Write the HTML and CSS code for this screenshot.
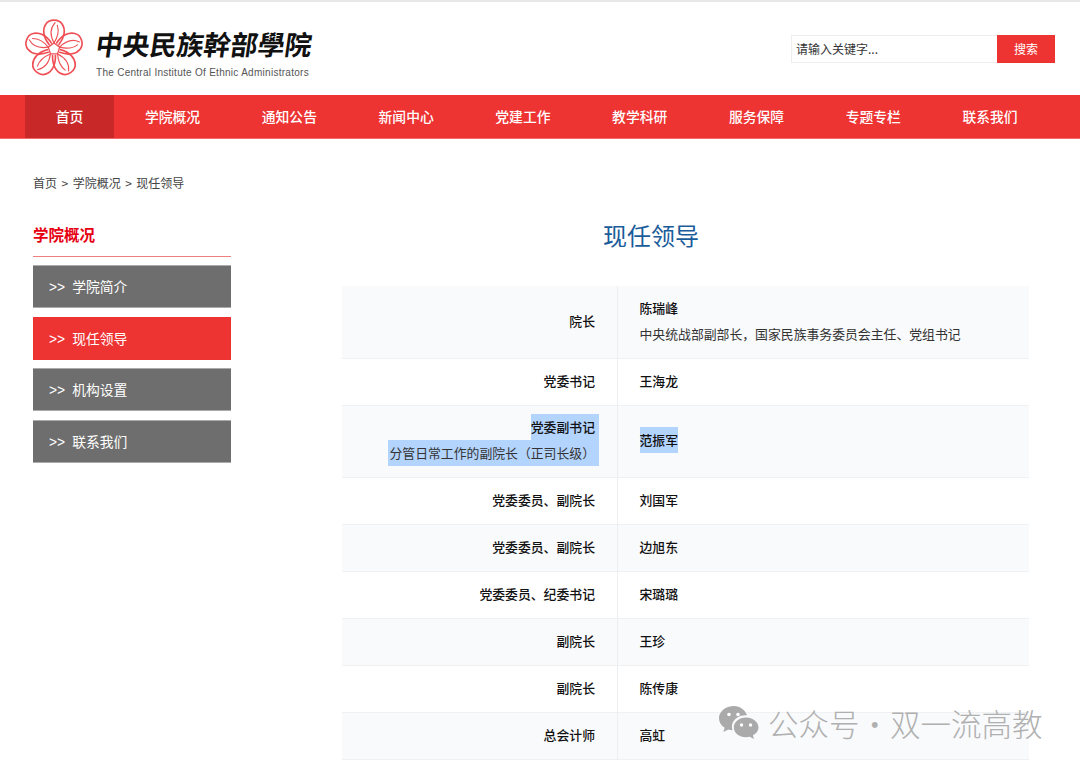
FILE: index.html
```html
<!DOCTYPE html>
<html lang="zh-CN">

<head>
    <meta charset="UTF-8">
    <title>现任领导</title>
    <link rel="stylesheet" href="styles.css">
</head>

<body>

    <div class="header">
        <div class="logo">
            <svg class="flower" viewBox="0 0 60 60" width="66" height="66" fill="none" stroke="#ef4f54" stroke-width="1.500" stroke-linecap="round">
                <g id="petal">
                    <path d="M25.500 26C20 19 19.500 12 22.500 7.500C25.500 2.500 34.500 2.500 37.500 7.500C40.500 12 40 19 34.500 26"/>
                    <path d="M30 24.500C26.500 18 26.500 11 31 6" stroke-width="1"/>
                    <path d="M30 24.500C33.500 19 34.500 13 33 8.500" stroke-width="1"/>
                </g>
                <use href="#petal" transform="rotate(72 30 30)"/>
                <use href="#petal" transform="rotate(144 30 30)"/>
                <use href="#petal" transform="rotate(216 30 30)"/>
                <use href="#petal" transform="rotate(288 30 30)"/>
                <path d="M30 24.500L35.200 28.300L33.200 34.400H26.800L24.800 28.300Z" stroke-width="1.200" stroke-linejoin="round"/>
            </svg>
            <div class="logo-text">
                <div class="logo-cn">中央民族幹部學院</div>
                <div class="logo-en">The Central Institute Of Ethnic Administrators</div>
            </div>
        </div>
        <div class="search">
            <div class="search-input">请输入关键字...</div>
            <div class="search-btn">搜索</div>
        </div>
    </div>

    <div class="nav">
        <a class="active">首页</a>
        <a>学院概况</a>
        <a>通知公告</a>
        <a>新闻中心</a>
        <a>党建工作</a>
        <a>教学科研</a>
        <a>服务保障</a>
        <a>专题专栏</a>
        <a>联系我们</a>
    </div>

    <div class="crumb">首页 <span>&gt;</span> 学院概况 <span>&gt;</span> 现任领导</div>

    <div class="main">
        <div class="side">
            <div class="side-title">学院概况</div>
            <a class="side-item"><span>&gt;&gt;</span>学院简介</a>
            <a class="side-item on"><span>&gt;&gt;</span>现任领导</a>
            <a class="side-item"><span>&gt;&gt;</span>机构设置</a>
            <a class="side-item"><span>&gt;&gt;</span>联系我们</a>
        </div>
        <div class="content">
            <h1>现任领导</h1>
            <table>
                <tr class="tall">
                    <td class="job">院长</td>
                    <td class="name">陈瑞峰<div class="note">中央统战部副部长，国家民族事务委员会主任、党组书记</div></td>
                </tr>
                <tr>
                    <td class="job">党委书记</td>
                    <td class="name">王海龙</td>
                </tr>
                <tr class="tall">
                    <td class="job"><span class="sel">党委副书记</span><br><span class="sel note">分管日常工作的副院长（正司长级）</span></td>
                    <td class="name"><span class="sel-name">范振军</span></td>
                </tr>
                <tr>
                    <td class="job">党委委员、副院长</td>
                    <td class="name">刘国军</td>
                </tr>
                <tr>
                    <td class="job">党委委员、副院长</td>
                    <td class="name">边旭东</td>
                </tr>
                <tr>
                    <td class="job">党委委员、纪委书记</td>
                    <td class="name">宋璐璐</td>
                </tr>
                <tr>
                    <td class="job">副院长</td>
                    <td class="name">王珍</td>
                </tr>
                <tr>
                    <td class="job">副院长</td>
                    <td class="name">陈传康</td>
                </tr>
                <tr>
                    <td class="job">总会计师</td>
                    <td class="name">高虹</td>
                </tr>
            </table>
        </div>
    </div>

    <div class="watermark">
        <svg viewBox="0 0 42 36" width="42" height="36" fill="#aaaaaa">
            <path d="M16 1C7.700 1 1 6.500 1 13.300C1 17.200 3.200 20.600 6.700 22.800L5.300 27L10.300 24.500C11.600 24.900 13 25.200 14.500 25.300C14.100 24 13.900 22.900 13.900 21.700C13.900 15.200 20 10.300 27.600 10.300H29C27.100 5 22 1 16 1Z"/>
            <path d="M28 12.500C21.100 12.500 15.800 17 15.800 22.400C15.800 27.800 21.100 32.200 28 32.200C29.300 32.200 30.600 32 31.800 31.700L36 34L34.900 30.300C38.400 28.400 40.500 25.500 40.500 22.400C40.500 17 34.900 12.500 28 12.500Z"/>
            <circle cx="11" cy="9.500" r="1.800" fill="#fff"/>
            <circle cx="20" cy="9.500" r="1.800" fill="#fff"/>
            <circle cx="23.500" cy="20" r="1.700" fill="#fff"/>
            <circle cx="32.500" cy="20" r="1.700" fill="#fff"/>
        </svg>
        <span>公众号·双一流高教</span>
    </div>

</body>

</html>
```

FILE: styles.css
```css
html, body {
    height: 768px;
    overflow: hidden;
}

body {
    margin: 0;
    padding: 0;
    background-color: #fff;
    font-family: "Noto Sans CJK SC", "Noto Sans", sans-serif;
    color: #222;
    position: relative;
}

a {
    display: block;
}

.header {
    height: 93px;
    border-top: 2px solid #e8e8e8;
    display: flex;
    justify-content: space-between;
    align-items: center;
    padding: 0 25px;
}

.logo {
    display: flex;
    align-items: center;
    gap: 12px;
}

.flower {
    display: block;
    margin: 0 -3px 0 -4px;
}

.logo-text {
    padding-top: 8px;
}

.logo-cn {
    font-size: 27px;
    line-height: 34px;
    color: #111;
    letter-spacing: 0;
    font-weight: 700;
    transform: skewX(-8deg);
}

.logo-en {
    font-family: "Liberation Sans", sans-serif;
    font-size: 10px;
    line-height: 12px;
    color: #555;
    letter-spacing: 0.028em;
    margin-top: 6px;
}

.search {
    display: flex;
    height: 28px;
}

.search-input {
    width: 201px;
    border: 1px solid #eee;
    border-right: none;
    padding-left: 4px;
    font-size: 12px;
    line-height: 26px;
    color: #333;
}

.search-btn {
    width: 58px;
    background-color: #ee3333;
    color: #fff;
    font-size: 12px;
    line-height: 28px;
    text-align: center;
}

.nav {
    height: 43px;
    background-color: #ee3333;
    border-bottom: 1px solid #f26a6a;
    display: flex;
    padding-left: 25px;
}

.nav a {
    padding: 0 30.800px;
    font-size: 13.800px;
    font-weight: 500;
    line-height: 43px;
    color: #fff;
    white-space: nowrap;
}

.nav a.active {
    background-color: #c92828;
}

.crumb {
    padding: 35px 0 0 33px;
    font-size: 12px;
    line-height: 18px;
    color: #444;
}

.crumb span {
    margin: 0 1.800px;
}

.main {
    display: flex;
    padding: 17px 51px 0 33px;
}

.side {
    width: 198px;
    flex: none;
}

.side-title {
    height: 36px;
    padding-top: 11px;
    font-size: 15.500px;
    font-weight: 700;
    line-height: 28px;
    color: #e60012;
    border-bottom: 1px solid #f08080;
    margin-bottom: 8px;
}

.side-item {
    height: 41px;
    border-top: 1px solid #aaa;
    border-bottom: 1px solid #aaa;
    background-color: #6e6e6e;
    color: #fff;
    font-size: 13.800px;
    line-height: 41px;
    padding-left: 16px;
    margin-bottom: 8.500px;
}

.side-item span {
    font-family: "Liberation Sans", sans-serif;
    margin-right: 7px;
}

.side-item.on {
    background-color: #ee3333;
    border-color: #ee3333;
}

.content {
    width: 687px;
    margin-left: 111px;
}

h1 {
    margin: 0;
    padding: 6px 69px 0 0;
    height: 70.500px;
    font-size: 24px;
    font-weight: 400;
    line-height: 40px;
    text-align: center;
    color: #1a5c9a;
}

table {
    width: 100%;
    border-collapse: collapse;
    table-layout: fixed;
    font-size: 12.850px;
}

tr {
    height: 47px;
    border-bottom: 1px solid #f0f1f3;
}

tr.tall {
    height: 72.500px;
}

tr:nth-child(odd) {
    background-color: #f9fafc;
}

td {
    padding: 0 0 2px;
    line-height: 26px;
    font-weight: 500;
    color: #111;
}

.job {
    width: 275px;
    padding-right: 21.500px;
    text-align: right;
    box-sizing: border-box;
    border-right: 1px solid #eceef0;
}

.name {
    padding-left: 22px;
}

.note {
    font-weight: 400;
    color: #333;
}

.sel {
    display: inline-block;
    background-color: #b3d4fd;
    padding-right: 4px;
    margin-right: -4px;
}

.sel.note {
    padding-left: 1px;
}

.sel-name {
    display: inline-block;
    background-color: #b3d4fd;
}

.watermark {
    position: absolute;
    left: 718px;
    top: 705px;
    display: flex;
    align-items: center;
    gap: 8px;
    color: #b0b0b0;
    font-size: 30.500px;
    font-weight: 300;
    line-height: 36px;
    white-space: nowrap;
}
```
